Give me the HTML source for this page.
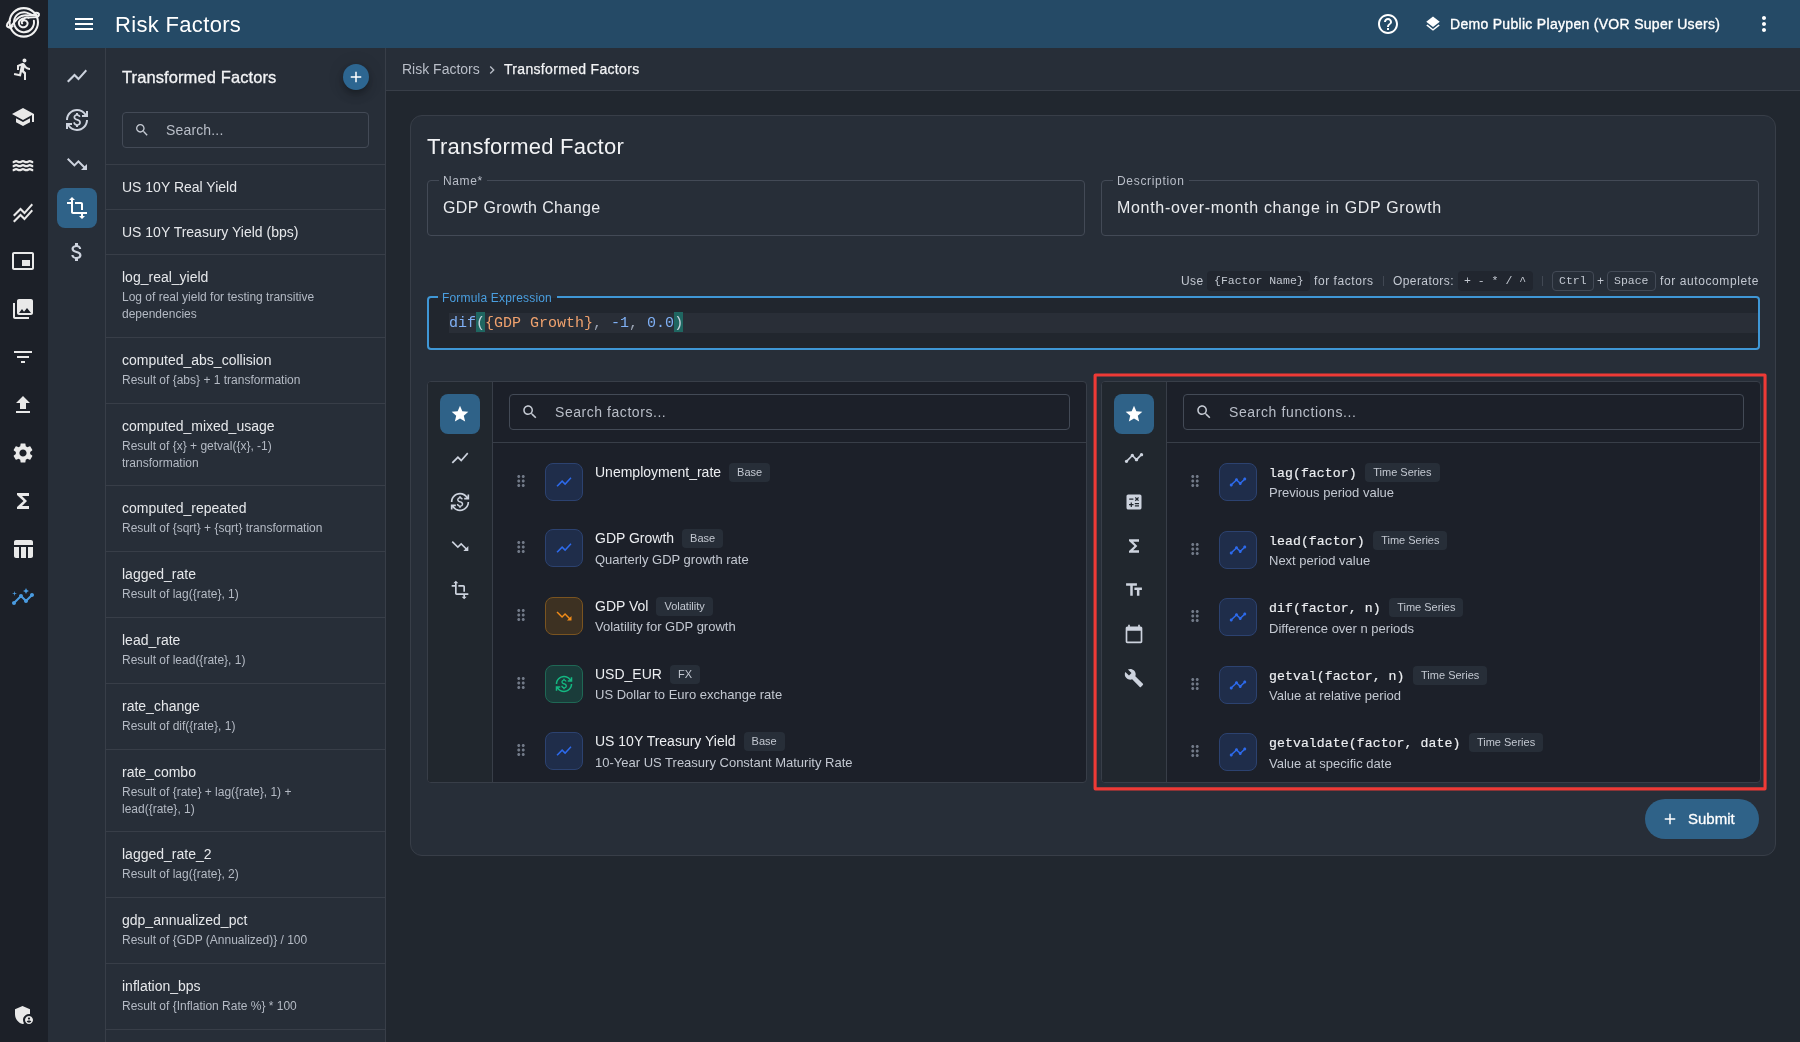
<!DOCTYPE html>
<html lang="en">
<head>
<meta charset="utf-8">
<title>Risk Factors</title>
<style>
*{box-sizing:border-box;margin:0;padding:0}
html,body{width:1800px;height:1042px;overflow:hidden;background:#21272f}
body{position:relative;font-family:"Liberation Sans",sans-serif;color:#e6e8eb;-webkit-font-smoothing:antialiased}
.abs{position:absolute}
.t{position:absolute;white-space:nowrap;will-change:transform}
svg{display:block}
.ic{position:absolute;width:24px;height:24px;fill:#fff}
/* frame */
#rail{left:0;top:0;width:48px;height:1042px;background:#1c2028}
#topbar{left:48px;top:0;width:1752px;height:48px;background:#254a66}
#rail2{left:48px;top:48px;width:58px;height:994px;background:#272e38;border-right:1px solid #383e48}
#side{left:106px;top:48px;width:280px;height:994px;background:#272e38;border-right:1px solid #383e48}
#crumb{left:386px;top:48px;width:1414px;height:43px;background:#272e38;border-bottom:1px solid #383e48}
#card{left:410px;top:115px;width:1366px;height:741px;background:#272e38;border:1px solid #383e48;border-radius:12px}
.hd{font-family:"Liberation Sans",sans-serif}
.mono{font-family:"Liberation Mono",monospace}
/* sidebar list */
.li{position:absolute;left:0;width:279px;border-top:1px solid #383e48}
.li .n{will-change:transform;position:absolute;left:16px;font-size:14px;line-height:20px;color:#e6e8eb;white-space:nowrap}
.li .d{will-change:transform;position:absolute;left:16px;font-size:12px;line-height:17px;color:#b4bac4;white-space:nowrap}
</style>
</head>
<body>
<div id="rail" class="abs"></div>
<div id="topbar" class="abs"></div>
<div id="rail2" class="abs"></div>
<div id="side" class="abs"></div>
<div id="crumb" class="abs"></div>
<div id="card" class="abs"></div>
<!--RAIL-->
<svg class="abs" id="logo" style="left:0;top:0;width:48px;height:48px" viewBox="0 0 48 48" fill="none" stroke="#f1f1f1" stroke-width="2" stroke-linecap="round" stroke-linejoin="round">
<circle cx="23.750" cy="22.350" r="14.250" stroke-width="2.100"/>
<path d="M10 20.800C7.600 22.600 5.900 25.200 7.500 26.800 9 28.100 11.200 27.400 12.600 26.200"/>
<path d="M34.500 12.900C36.800 12.300 39.500 13 39 15.100 38.700 16.300 37.800 16.700 36.800 16.900"/>
<path d="M33.880 20.640A10 10 0 1 1 29 13.540C31.500 15 34 15.500 36.800 15.300"/>
<path d="M8.800 27C11.500 26.500 13.500 23.500 15.500 20.800 17.500 18 20 15.700 24 15.400 27 15.200 31 15.600 36 15.500"/>
<path d="M28.60 17.70 L28.54 17.68 L28.47 17.67 L28.41 17.65 L28.34 17.64 L28.28 17.63 L28.21 17.61 L28.15 17.60 L28.08 17.59 L28.02 17.58 L27.96 17.57 L27.89 17.56 L27.83 17.56 L27.76 17.55 L27.70 17.54 L27.64 17.54 L27.57 17.53 L27.51 17.53 L27.45 17.52 L27.38 17.52 L27.32 17.52 L27.26 17.51 L27.20 17.51 L27.13 17.51 L27.07 17.51 L27.01 17.51 L26.95 17.51 L26.89 17.51 L26.83 17.52 L26.77 17.52 L26.71 17.52 L26.65 17.53 L26.59 17.53 L26.53 17.54 L26.47 17.54 L26.41 17.55 L26.35 17.56 L26.29 17.56 L26.23 17.57 L26.17 17.58 L26.12 17.59 L26.06 17.60 L26.00 17.61 L25.95 17.62 L25.89 17.63 L25.83 17.64 L25.78 17.66 L25.72 17.67 L25.67 17.68 L25.61 17.70 L25.56 17.71 L25.50 17.73 L25.45 17.74 L25.40 17.76 L25.34 17.78 L25.29 17.79 L25.24 17.81 L25.19 17.83 L25.14 17.85 L25.09 17.87 L25.04 17.89 L24.99 17.91 L24.94 17.93 L24.89 17.95 L24.84 17.97 L24.79 17.99 L24.74 18.01 L24.69 18.04 L24.65 18.06 L24.60 18.08 L24.55 18.11 L24.51 18.13 L24.46 18.16 L24.42 18.18 L24.37 18.21 L24.33 18.23 L24.29 18.26 L24.24 18.29 L24.20 18.32 L24.16 18.34 L24.12 18.37 L24.07 18.37 L24.03 18.37 L23.99 18.37 L23.95 18.38 L23.91 18.38 L23.87 18.38 L23.83 18.38 L23.79 18.39 L23.74 18.39 L23.70 18.39 L23.66 18.40 L23.62 18.40 L23.58 18.41 L23.54 18.41 L23.50 18.42 L23.46 18.42 L23.42 18.43 L23.38 18.44 L23.34 18.44 L23.30 18.45 L23.26 18.46 L23.22 18.47 L23.18 18.47 L23.14 18.48 L23.10 18.49 L23.06 18.50 L23.03 18.51 L22.99 18.52 L22.95 18.53 L22.91 18.54 L22.87 18.55 L22.83 18.56 L22.80 18.58 L22.76 18.59 L22.72 18.60 L22.68 18.61 L22.65 18.63 L22.61 18.64 L22.57 18.65 L22.54 18.67 L22.50 18.68 L22.46 18.70 L22.43 18.71 L22.39 18.73 L22.36 18.74 L22.32 18.76 L22.29 18.77 L22.25 18.79 L22.22 18.81 L22.18 18.82 L22.15 18.84 L22.11 18.86 L22.08 18.87 L22.04 18.89 L22.01 18.91 L21.98 18.93 L21.94 18.95 L21.91 18.97 L21.88 18.99 L21.85 19.01 L21.81 19.03 L21.78 19.05 L21.75 19.07 L21.72 19.09 L21.69 19.11 L21.66 19.13 L21.63 19.15 L21.60 19.17 L21.57 19.19 L21.54 19.22 L21.51 19.24 L21.48 19.26 L21.45 19.28 L21.42 19.31 L21.39 19.33 L21.36 19.35 L21.33 19.38 L21.31 19.40 L21.28 19.43 L21.25 19.45 L21.20 19.47 L21.15 19.50 L21.11 19.52 L21.06 19.55 L21.01 19.58 L20.96 19.60 L20.92 19.63 L20.87 19.66 L20.83 19.69 L20.78 19.72 L20.74 19.75 L20.69 19.78 L20.65 19.81 L20.60 19.84 L20.56 19.88 L20.52 19.91 L20.47 19.94 L20.43 19.98 L20.39 20.01 L20.35 20.05 L20.31 20.08 L20.27 20.12 L20.23 20.16 L20.19 20.20 L20.15 20.23 L20.11 20.27 L20.07 20.31 L20.03 20.35 L19.99 20.39 L19.96 20.44 L19.92 20.48 L19.89 20.52 L19.85 20.56 L19.82 20.61 L19.78 20.65 L19.75 20.69 L19.72 20.74 L19.68 20.78 L19.65 20.83 L19.62 20.88 L19.59 20.92 L19.56 20.97 L19.53 21.02 L19.50 21.06 L19.47 21.11 L19.44 21.16 L19.42 21.21 L19.39 21.26 L19.36 21.31 L19.34 21.36 L19.31 21.41 L19.29 21.46 L19.27 21.51 L19.24 21.56 L19.22 21.62 L19.20 21.67 L19.18 21.72 L19.16 21.77 L19.14 21.83 L19.12 21.88 L19.10 21.93 L19.09 21.99 L19.07 22.04 L19.05 22.10 L19.04 22.15 L19.03 22.21 L19.01 22.26 L19.00 22.32 L18.99 22.37 L18.97 22.43 L18.96 22.49 L18.95 22.54 L18.94 22.60 L18.94 22.66 L18.93 22.71 L18.92 22.77 L18.91 22.83 L18.91 22.89 L18.90 22.94 L18.90 23.00 L18.90 23.09 L18.91 23.17 L18.91 23.26 L18.92 23.34 L18.93 23.43 L18.94 23.52 L18.95 23.60 L18.96 23.69 L18.98 23.77 L19.00 23.86 L19.02 23.94 L19.04 24.02 L19.06 24.11 L19.08 24.19 L19.11 24.27 L19.13 24.35 L19.16 24.43 L19.19 24.52 L19.22 24.60 L19.26 24.67 L19.29 24.75 L19.33 24.83 L19.37 24.91 L19.41 24.98 L19.45 25.06 L19.49 25.13 L19.53 25.21 L19.58 25.28 L19.62 25.35 L19.67 25.42 L19.72 25.49 L19.77 25.56 L19.82 25.63 L19.88 25.70 L19.93 25.76 L19.99 25.83 L20.05 25.89 L20.10 25.95 L20.16 26.02 L20.22 26.08 L20.29 26.13 L20.35 26.19 L20.41 26.25 L20.48 26.30 L20.54 26.36 L20.61 26.41 L20.68 26.46 L20.75 26.51 L20.82 26.56 L20.89 26.61 L20.96 26.65 L21.03 26.70 L21.11 26.74 L21.18 26.78 L21.26 26.82 L21.33 26.86 L21.41 26.89 L21.49 26.93 L21.57 26.96 L21.64 27.00 L21.72 27.03 L21.80 27.06 L21.88 27.08 L21.97 27.11 L22.05 27.13 L22.13 27.16 L22.21 27.18 L22.29 27.20 L22.38 27.21 L22.46 27.23 L22.54 27.24 L22.63 27.26 L22.71 27.27 L22.79 27.28 L22.88 27.29 L22.96 27.29 L23.05 27.30 L23.13 27.30 L23.22 27.30 L23.30 27.30 L23.38 27.30 L23.47 27.30 L23.55 27.29 L23.64 27.29 L23.72 27.28 L23.81 27.27 L23.89 27.26 L23.97 27.25 L24.06 27.23 L24.14 27.22 L24.22 27.20 L24.30 27.18 L24.39 27.16 L24.47 27.14 L24.55 27.11 L24.63 27.09 L24.71 27.06 L24.79 27.03 L24.87 27.00 L24.95 26.97 L25.02 26.94 L25.10 26.91 L25.18 26.87 L25.25 26.83 L25.33 26.79 L25.40 26.75 L25.47 26.71 L25.55 26.67 L25.62 26.62 L25.69 26.58 L25.76 26.53 L25.83 26.48 L25.90 26.43 L25.96 26.38 L26.03 26.32 L26.09 26.27 L26.16 26.21 L26.22 26.16 L26.28 26.10 L26.34 26.04 L26.40 25.98 L26.46 25.92 L26.51 25.86 L26.57 25.79 L26.62 25.73 L26.68 25.66 L26.73 25.60 L26.78 25.53 L26.83 25.46 L26.88 25.39 L26.92 25.32 L26.97 25.25 L27.01 25.17 L27.05 25.10 L27.09 25.03 L27.13 24.95 L27.17 24.88 L27.21 24.80 L27.24 24.72 L27.27 24.65 L27.30 24.57 L27.33 24.49 L27.36 24.41 L27.39 24.33 L27.41 24.25 L27.44 24.17 L27.46 24.09 L27.48 24.00 L27.50 23.92 L27.52 23.84 L27.53 23.76 L27.55 23.67 L27.56 23.59 L27.57 23.51 L27.58 23.42 L27.59 23.34 L27.59 23.25 L27.60 23.17 L27.60 23.08 L27.60 23.00 L27.58 22.92 L27.55 22.83 L27.52 22.75 L27.49 22.67 L27.46 22.59 L27.43 22.51 L27.39 22.43 L27.36 22.36 L27.32 22.28 L27.28 22.21 L27.24 22.13 L27.20 22.06 L27.16 21.99 L27.12 21.92 L27.07 21.86 L27.03 21.79 L26.98 21.72 L26.93 21.66 L26.88 21.60 L26.83 21.54 L26.78 21.48 L26.73 21.42 L26.68 21.36 L26.62 21.31 L26.57 21.25 L26.51 21.20 L26.46 21.15 L26.40 21.10 L26.34 21.05 L26.28 21.01 L26.22 20.96 L26.16 20.92 L26.10 20.88 L26.04 20.84 L25.98 20.80 L25.92 20.76 L25.86 20.73 L25.79 20.69 L25.73 20.66 L25.67 20.63 L25.61 20.60 L25.54 20.57 L25.48 20.55 L25.41 20.52 L25.35 20.50 L25.29 20.48 L25.22 20.46 L25.16 20.44 L25.09 20.43 L25.03 20.41 L24.97 20.40 L24.90 20.39 L24.84 20.38 L24.77 20.37 L24.71 20.36 L24.65 20.35 L24.59 20.35 L24.52 20.35 L24.46 20.34 L24.40 20.34 L24.34 20.34 L24.28 20.35 L24.22 20.35 L24.16 20.36 L24.10 20.36 L24.04 20.37 L23.98 20.38 L23.93 20.39 L23.87 20.40 L23.81 20.41 L23.76 20.43 L23.71 20.44 L23.65 20.46 L23.60 20.48 L23.55 20.49 L23.50 20.51 L23.45 20.53 L23.40 20.55 L23.35 20.58 L23.30 20.60 L23.24 20.62 L23.19 20.63 L23.13 20.65 L23.08 20.67 L23.02 20.69 L22.97 20.71 L22.92 20.74 L22.86 20.76 L22.81 20.79 L22.77 20.81 L22.72 20.84 L22.67 20.87 L22.62 20.90 L22.58 20.93 L22.53 20.96 L22.49 21.00 L22.45 21.03 L22.41 21.07 L22.37 21.10 L22.33 21.14 L22.29 21.17 L22.26 21.21 L22.22 21.25 L22.19 21.29 L22.16 21.33 L22.13 21.37 L22.10 21.41 L22.07 21.45 L22.04 21.49 L22.01 21.53 L21.99 21.58 L21.97 21.62 L21.94 21.66 L21.92 21.71 L21.90 21.75 L21.89 21.79 L21.87 21.84 L21.85 21.88 L21.84 21.92 L21.83 21.97 L21.81 22.01 L21.80 22.06 L21.79 22.10 L21.79 22.14 L21.78 22.19 L21.77 22.23 L21.77 22.27 L21.77 22.32 L21.76 22.36 L21.76 22.40 L21.76 22.44 L21.76 22.49 L21.77 22.53 L21.77 22.57 L21.77 22.61 L21.78 22.65 L21.79 22.69 L21.79 22.73 L21.80 22.77 L21.81 22.80 L21.82 22.84 L21.84 22.88 L21.85 22.91 L21.86 22.95 L21.88 22.98 L21.89 23.02 L21.91 23.05 L21.92 23.08 L21.94 23.12 L21.96 23.15 L21.98 23.18 L22.00 23.21 L22.02 23.24 L22.04 23.26 L22.06 23.29 L22.08 23.32 L22.10 23.34 L22.13 23.36 L22.15 23.39 L22.17 23.41"/>
<path d="M28.300 17.700L37.300 17.300" stroke-width="1.600"/>
</svg>
<svg class="ic" style="left:11px;top:57px;width:24px;height:24px;fill:#e9e9e9" viewBox="0 0 24 24"><path d="M13.49 5.48c1.1 0 2-.9 2-2s-.9-2-2-2-2 .9-2 2 .9 2 2 2zm-3.6 13.9l1-4.4 2.1 2v6h2v-7.5l-2.1-2 .6-3c1.3 1.5 3.3 2.5 5.5 2.5v-2c-1.9 0-3.5-1-4.3-2.4l-1-1.6c-.4-.6-1-1-1.7-1-.3 0-.5.1-.8.1l-5.2 2.2v4.7h2v-3.4l1.8-.7-1.6 8.1-4.9-1-.4 2 7 1.4z"/></svg>
<svg class="ic" style="left:11px;top:105px;width:24px;height:24px;fill:#e9e9e9" viewBox="0 0 24 24"><path d="M5 13.18v4L12 21l7-3.82v-4L12 17l-7-3.82zM12 3L1 9l11 6 9-4.91V17h2V9L12 3z"/></svg>
<svg class="ic" style="left:11px;top:153px" viewBox="0 0 24 24"><path d="M1.700 9.2c1.700 0 1.700-1 3.420-1s1.700 1 3.420 1 1.700-1 3.420-1 1.700 1 3.420 1 1.700-1 3.420-1 1.700 1 3.420 1" fill="none" stroke="#e9e9e9" stroke-width="2.300"/><path d="M1.700 13.2c1.700 0 1.700-1 3.420-1s1.700 1 3.420 1 1.700-1 3.420-1 1.700 1 3.420 1 1.700-1 3.420-1 1.700 1 3.420 1" fill="none" stroke="#e9e9e9" stroke-width="2.300"/><path d="M1.700 17.2c1.700 0 1.700-1 3.420-1s1.700 1 3.420 1 1.700-1 3.420-1 1.700 1 3.420 1 1.700-1 3.420-1 1.700 1 3.420 1" fill="none" stroke="#e9e9e9" stroke-width="2.300"/></svg>
<svg class="ic" style="left:11px;top:201px;width:24px;height:24px;fill:#e9e9e9" viewBox="0 0 24 24"><path d="M2 19.99l7.5-7.51 4 4 7.09-7.97L22 9.92l-8.5 9.56-4-4-6 6.01-1.5-1.5zm1.5-4.5l6-6.01 4 4L22 3.92l-1.41-1.41-7.09 7.97-4-4L2 13.990l1.500 1.500z"/></svg>
<svg class="ic" style="left:11px;top:249px;width:24px;height:24px;fill:#e9e9e9" viewBox="0 0 24 24"><path d="M19 11h-8v6h8v-6zm4 8V4.980C23 3.880 22.100 3 21 3H3c-1.100 0-2 .880-2 1.980V19c0 1.100.900 2 2 2h18c1.100 0 2-.900 2-2zm-2 .020H3V4.970h18v14.050z"/></svg>
<svg class="ic" style="left:11px;top:297px;width:24px;height:24px;fill:#e9e9e9" viewBox="0 0 24 24"><path d="M22 16V4c0-1.100-.900-2-2-2H8c-1.100 0-2 .900-2 2v12c0 1.100.900 2 2 2h12c1.100 0 2-.900 2-2zm-11-4l2.030 2.710L16 11l4 5H8l3-4zM2 6v14c0 1.100.900 2 2 2h14v-2H4V6H2z"/></svg>
<svg class="ic" style="left:11px;top:345px;width:24px;height:24px;fill:#e9e9e9" viewBox="0 0 24 24"><path d="M10 18h4v-2h-4v2zM3 6v2h18V6H3zm3 7h12v-2H6v2z"/></svg>
<svg class="ic" style="left:11px;top:393px;width:24px;height:24px;fill:#e9e9e9" viewBox="0 0 24 24"><path d="M5 20h14v-2H5v2zm0-10h4v6h6v-6h4l-7-7-7 7z"/></svg>
<svg class="ic" style="left:11px;top:441px;width:24px;height:24px;fill:#e9e9e9" viewBox="0 0 24 24"><path d="M19.14 12.94c.04-.3.06-.61.06-.94 0-.32-.02-.64-.07-.94l2.030-1.580c.180-.140.230-.410.120-.610l-1.920-3.320c-.120-.220-.370-.290-.590-.220l-2.390.960c-.500-.380-1.030-.700-1.620-.940l-.360-2.540c-.040-.240-.240-.410-.480-.410h-3.840c-.240 0-.430.170-.470.410l-.360 2.540c-.590.240-1.130.570-1.620.940l-2.390-.960c-.220-.080-.470 0-.590.220L2.740 8.870c-.120.210-.080.470.120.610l2.030 1.580c-.050.300-.090.630-.090.940s.020.640.070.940l-2.030 1.580c-.180.140-.230.410-.120.610l1.920 3.320c.120.220.370.290.590.220l2.390-.960c.500.380 1.030.700 1.620.940l.360 2.540c.050.240.240.410.480.410h3.840c.240 0 .440-.170.470-.410l.360-2.540c.590-.240 1.130-.560 1.620-.940l2.390.960c.220.080.470 0 .590-.220l1.920-3.320c.120-.220.070-.470-.120-.610l-2.010-1.580zM12 15.600c-1.980 0-3.600-1.620-3.600-3.600s1.620-3.600 3.600-3.600 3.600 1.620 3.600 3.600-1.620 3.600-3.600 3.600z"/></svg>
<svg class="ic" style="left:11px;top:489px;width:24px;height:24px;fill:#e9e9e9" viewBox="0 0 24 24"><path d="M18 4H6v2l6.500 6L6 18v2h12v-3h-7l5-5-5-5h7z"/></svg>
<svg class="ic" style="left:11px;top:537px;width:24px;height:24px;fill:#e9e9e9" viewBox="0 0 24 24"><path d="M10 10.020h5V21h-5zM17 21h3c1.100 0 2-.900 2-2v-9h-5v11zm3-18H5c-1.100 0-2 .900-2 2v3h19V5c0-1.100-.900-2-2-2zM3 19c0 1.100.900 2 2 2h3V10H3v9z"/></svg>
<svg class="ic" style="left:11px;top:585px;width:24px;height:24px;fill:#4a9be0" viewBox="0 0 24 24"><path d="M21 8c-1.450 0-2.260 1.440-1.930 2.510l-3.550 3.560c-.300-.090-.740-.090-1.040 0l-2.550-2.550C12.270 10.450 11.460 9 10 9c-1.450 0-2.270 1.440-1.930 2.520l-4.560 4.550C2.440 15.740 1 16.550 1 18c0 1.100.900 2 2 2 1.450 0 2.260-1.440 1.930-2.510l4.550-4.560c.300.090.740.090 1.040 0l2.550 2.550C12.730 16.550 13.540 18 15 18c1.450 0 2.270-1.440 1.930-2.520l3.560-3.550c1.070.330 2.510-.480 2.510-1.930 0-1.100-.900-2-2-2zM15 9l.940-2.070L18 6l-2.060-.930L15 3l-.920 2.070L12 6l2.080.930zM3.500 11L4 9l2-.500L4 8l-.500-2L3 8l-2 .500L3 9z"/></svg>
<svg class="ic" style="left:12px;top:1003px;width:24px;height:24px;fill:#e9e9e9" viewBox="0 0 24 24"><path d="M17 11c.340 0 .670.040 1 .090V6.270L10.500 3 3 6.270v4.910c0 4.540 3.200 8.790 7.500 9.820.550-.130 1.080-.320 1.600-.550-.690-.980-1.100-2.170-1.100-3.450 0-3.310 2.690-6 6-6zM17 13c-2.210 0-4 1.790-4 4s1.790 4 4 4 4-1.790 4-4-1.790-4-4-4zm0 1.380c.620 0 1.120.510 1.120 1.120s-.510 1.120-1.120 1.120-1.120-.510-1.120-1.120.500-1.120 1.120-1.120zm0 5.370c-.930 0-1.740-.460-2.240-1.170.050-.720 1.510-1.080 2.240-1.080s2.190.360 2.240 1.080c-.500.710-1.310 1.170-2.240 1.170z"/></svg>
<!--TOPBAR-->
<svg class="ic" style="left:72px;top:12px;width:24px;height:24px;fill:#fff" viewBox="0 0 24 24"><path d="M3 18h18v-2H3v2zm0-5h18v-2H3v2zm0-7v2h18V6H3z"/></svg>
<div class="t hd" id="apptitle" style="left:114.500px;top:9px;font-size:22px;line-height:32px;color:#fff;letter-spacing:0.330px">Risk Factors</div>
<svg class="ic" style="left:1376px;top:12px;width:24px;height:24px;fill:#fff" viewBox="0 0 24 24"><path d="M11 18h2v-2h-2v2zm1-16C6.480 2 2 6.480 2 12s4.480 10 10 10 10-4.480 10-10S17.520 2 12 2zm0 18c-4.410 0-8-3.590-8-8s3.590-8 8-8 8 3.590 8 8-3.590 8-8 8zm0-14c-2.210 0-4 1.790-4 4h2c0-1.100.900-2 2-2s2 .900 2 2c0 2-3 1.750-3 5h2c0-2.250 3-2.500 3-5 0-2.210-1.790-4-4-4z"/></svg>
<svg class="ic" style="left:1424px;top:15px;width:18px;height:18px;fill:#fff" viewBox="0 0 24 24"><path d="M11.990 18.540l-7.370-5.730L3 14.070l9 7 9-7-1.630-1.270-7.380 5.740zM12 16l7.360-5.730L21 9l-9-7-9 7 1.630 1.270L12 16z"/></svg>
<div class="t hd" id="tenant" style="left:1450px;top:14px;font-size:14px;line-height:20px;color:#fff;font-weight:400;letter-spacing:0.300px;-webkit-text-stroke:0.350px #fff">Demo Public Playpen (VOR Super Users)</div>
<svg class="ic" style="left:1752px;top:12px;width:24px;height:24px;fill:#fff" viewBox="0 0 24 24"><path d="M12 8c1.100 0 2-.900 2-2s-.900-2-2-2-2 .900-2 2 .900 2 2 2zm0 2c-1.100 0-2 .900-2 2s.900 2 2 2 2-.900 2-2-.900-2-2-2zm0 6c-1.100 0-2 .900-2 2s.900 2 2 2 2-.900 2-2-.900-2-2-2z"/></svg>
<!--RAIL2-->
<svg class="ic" style="left:65px;top:64px;width:24px;height:24px;fill:#cdd3de" viewBox="0 0 24 24"><path d="M3.500 18.490l6-6.010 4 4L22 6.920l-1.410-1.410-7.090 7.970-4-4L2 16.990z"/></svg>
<svg class="ic" style="left:65px;top:108px;width:24px;height:24px;fill:#cdd3de" viewBox="0 0 24 24"><path d="M12.890 11.100c-1.780-.590-2.640-.960-2.640-1.900 0-1.020 1.110-1.390 1.810-1.390 1.310 0 1.790.990 1.900 1.340l1.580-.670c-.150-.450-.820-1.920-2.540-2.240V5h-2v1.260c-2.480.560-2.490 2.860-2.490 2.960 0 2.270 2.250 2.910 3.350 3.310 1.580.560 2.280 1.070 2.280 2.030 0 1.130-1.050 1.610-1.980 1.610-1.820 0-2.340-1.870-2.400-2.090l-1.660.670c.630 2.190 2.280 2.780 2.900 2.960V19h2v-1.240c.400-.090 2.900-.590 2.900-3.220 0-1.390-.610-2.610-3.010-3.440zM3 21H1v-6h6v2H4.520c1.610 2.410 4.360 4 7.480 4 4.970 0 9-4.030 9-9h2c0 6.080-4.920 11-11 11-3.720 0-7.010-1.850-9-4.670V21zm-2-9C1 5.920 5.920 1 12 1c3.720 0 7.010 1.850 9 4.670V3h2v6h-6V7h2.480C17.870 4.590 15.120 3 12 3c-4.970 0-9 4.030-9 9H1z"/></svg>
<svg class="ic" style="left:65px;top:152px;width:24px;height:24px;fill:#cdd3de" viewBox="0 0 24 24"><path d="M16 18l2.290-2.290-4.880-4.880-4 4L2 7.410 3.410 6l6 6 4-4 6.300 6.290L22 12v6z"/></svg>
<div class="abs" style="left:57px;top:188px;width:40px;height:40px;border-radius:8px;background:#2f6288"></div>
<svg class="ic" style="left:65px;top:196px;width:24px;height:24px;fill:#fff" viewBox="0 0 24 24"><path d="M22 18v-2H8V4h2L7 1 4 4h2v2H2v2h4v8c0 1.100.900 2 2 2h8v2h-2l3 3 3-3h-2v-2h4zM10 8h6v6h2V8c0-1.100-.900-2-2-2h-6v2z"/></svg>
<svg class="ic" style="left:65px;top:240px;width:24px;height:24px;fill:#cdd3de" viewBox="0 0 24 24"><path d="M11.800 10.900c-2.270-.590-3-1.200-3-2.150 0-1.090 1.010-1.850 2.700-1.850 1.780 0 2.440.850 2.500 2.100h2.210c-.070-1.720-1.120-3.300-3.210-3.810V3h-3v2.160c-1.940.420-3.500 1.680-3.500 3.610 0 2.310 1.910 3.460 4.700 4.130 2.500.600 3 1.480 3 2.410 0 .690-.490 1.790-2.700 1.790-2.060 0-2.870-.920-2.980-2.100h-2.200c.120 2.190 1.760 3.420 3.680 3.830V21h3v-2.150c1.950-.370 3.500-1.500 3.500-3.550 0-2.840-2.430-3.810-4.700-4.400z"/></svg>
<!--SIDE-->
<div class="t hd" id="sidetitle" style="left:122px;top:65px;font-size:16.500px;line-height:24px;color:#f2f3f5;letter-spacing:0.100px;-webkit-text-stroke:0.300px #f2f3f5">Transformed Factors</div>
<div class="abs" style="left:343px;top:64px;width:26px;height:26px;border-radius:50%;background:#2d6691;box-shadow:0 3px 5px -1px rgba(0,0,0,.2),0 6px 10px rgba(0,0,0,.14),0 1px 18px rgba(0,0,0,.12)"></div>
<svg class="ic" style="left:347px;top:68px;width:18px;height:18px;fill:#fff" viewBox="0 0 24 24"><path d="M19 13h-6v6h-2v-6H5v-2h6V5h2v6h6v2z"/></svg>
<div class="abs" style="left:122px;top:112px;width:247px;height:36px;border:1px solid #434a56;border-radius:4px"></div>
<svg class="ic" style="left:134px;top:122px;width:16px;height:16px;fill:#c5cad3" viewBox="0 0 24 24"><path d="M15.500 14h-.790l-.280-.270C15.410 12.590 16 11.110 16 9.500 16 5.910 13.090 3 9.500 3S3 5.910 3 9.500 5.910 16 9.500 16c1.610 0 3.090-.590 4.230-1.570l.270.280v.790l5 4.990L20.490 19l-4.990-5zm-6 0C7.010 14 5 11.990 5 9.500S7.010 5 9.500 5 14 7.010 14 9.500 11.990 14 9.500 14z"/></svg>
<div class="t hd" id="sidesearch" style="left:166px;top:120px;font-size:14px;line-height:20px;color:#b9bec8;letter-spacing:0.160px">Search...</div>
<div class="li" style="left:106px;top:164px;height:45px"><div class="n" style="top:12px">US 10Y Real Yield</div></div>
<div class="li" style="left:106px;top:209px;height:45px"><div class="n" style="top:12px">US 10Y Treasury Yield (bps)</div></div>
<div class="li" style="left:106px;top:254px;height:83px"><div class="n" style="top:12px">log_real_yield</div><div class="d" style="top:34px">Log of real yield for testing transitive</div><div class="d" style="top:50.5px">dependencies</div></div>
<div class="li" style="left:106px;top:337px;height:66px"><div class="n" style="top:12px">computed_abs_collision</div><div class="d" style="top:34px">Result of {abs} + 1 transformation</div></div>
<div class="li" style="left:106px;top:403px;height:82px"><div class="n" style="top:12px">computed_mixed_usage</div><div class="d" style="top:34px">Result of {x} + getval({x}, -1)</div><div class="d" style="top:50.5px">transformation</div></div>
<div class="li" style="left:106px;top:485px;height:66px"><div class="n" style="top:12px">computed_repeated</div><div class="d" style="top:34px">Result of {sqrt} + {sqrt} transformation</div></div>
<div class="li" style="left:106px;top:551px;height:66px"><div class="n" style="top:12px">lagged_rate</div><div class="d" style="top:34px">Result of lag({rate}, 1)</div></div>
<div class="li" style="left:106px;top:617px;height:66px"><div class="n" style="top:12px">lead_rate</div><div class="d" style="top:34px">Result of lead({rate}, 1)</div></div>
<div class="li" style="left:106px;top:683px;height:66px"><div class="n" style="top:12px">rate_change</div><div class="d" style="top:34px">Result of dif({rate}, 1)</div></div>
<div class="li" style="left:106px;top:749px;height:82px"><div class="n" style="top:12px">rate_combo</div><div class="d" style="top:34px">Result of {rate} + lag({rate}, 1) +</div><div class="d" style="top:50.5px">lead({rate}, 1)</div></div>
<div class="li" style="left:106px;top:831px;height:66px"><div class="n" style="top:12px">lagged_rate_2</div><div class="d" style="top:34px">Result of lag({rate}, 2)</div></div>
<div class="li" style="left:106px;top:897px;height:66px"><div class="n" style="top:12px">gdp_annualized_pct</div><div class="d" style="top:34px">Result of {GDP (Annualized)} / 100</div></div>
<div class="li" style="left:106px;top:963px;height:66px"><div class="n" style="top:12px">inflation_bps</div><div class="d" style="top:34px">Result of {Inflation Rate %} * 100</div></div>
<div class="li" style="left:106px;top:1029px;height:20px"></div>
<!--CRUMB-->
<div class="t" id="bc1" style="left:402px;top:59px;font-size:14px;line-height:20px;color:#b9bec8">Risk Factors</div>
<svg class="ic" style="left:484px;top:61.5px;width:16px;height:16px;fill:#b9bec8" viewBox="0 0 24 24"><path d="M10 6L8.590 7.410 13.170 12l-4.580 4.590L10 18l6-6z"/></svg>
<div class="t hd" id="bc2" style="left:504px;top:59px;font-size:14px;line-height:20px;color:#f2f3f5;font-weight:400;letter-spacing:0.320px;-webkit-text-stroke:0.250px #f2f3f5">Transformed Factors</div>
<!--FORM-->
<div class="t hd" id="cardtitle" style="left:427px;top:131px;font-size:22px;line-height:32px;color:#f2f3f5;letter-spacing:0.260px">Transformed Factor</div>
<div class="abs" style="left:427px;top:180px;width:658px;height:56px;border:1px solid #434a56;border-radius:4px"></div>
<div class="t hd" id="lblname" style="left:439px;top:173px;padding:0 4px;font-size:12px;line-height:16px;color:#b9bec8;background:#272e38;letter-spacing:0.600px">Name*</div>
<div class="t hd" id="valname" style="left:443px;top:196px;font-size:16px;line-height:24px;color:#e9ebee;letter-spacing:0.390px">GDP Growth Change</div>
<div class="abs" style="left:1101px;top:180px;width:658px;height:56px;border:1px solid #434a56;border-radius:4px"></div>
<div class="t hd" id="lbldesc" style="left:1113px;top:173px;padding:0 4px;font-size:12px;line-height:16px;color:#b9bec8;background:#272e38;letter-spacing:0.680px">Description</div>
<div class="t hd" id="valdesc" style="left:1117px;top:196px;font-size:16px;line-height:24px;color:#e9ebee;letter-spacing:0.690px">Month-over-month change in GDP Growth</div>
<div class="t hd" id="h1" style="left:1181px;top:271px;font-size:12px;line-height:20px;color:#c3c8d1;letter-spacing:0.390px">Use</div>
<div class="abs" style="left:1207px;top:271px;width:103px;height:20px;background:#21262f;border-radius:4px"></div>
<div class="t mono" id="h2" style="left:1213.700px;top:271px;font-size:11.500px;line-height:20px;color:#c3c8d1">{Factor Name}</div>
<div class="t hd" id="h3" style="left:1313.700px;top:271px;font-size:12px;line-height:20px;color:#c3c8d1;letter-spacing:0.570px">for factors</div>
<div class="abs" style="left:1383px;top:276px;width:1px;height:10px;background:#414853"></div>
<div class="t hd" id="h4" style="left:1393.300px;top:271px;font-size:12px;line-height:20px;color:#c3c8d1;letter-spacing:0.420px">Operators:</div>
<div class="abs" style="left:1458px;top:271px;width:75px;height:20px;background:#21262f;border-radius:4px"></div>
<div class="t mono" id="h5" style="left:1464.200px;top:271px;font-size:11.500px;line-height:20px;color:#c3c8d1">+ - * / ^</div>
<div class="abs" style="left:1542px;top:276px;width:1px;height:10px;background:#414853"></div>
<div class="abs" style="left:1552px;top:271px;width:42px;height:20px;border:1px solid #434a56;border-radius:4px"></div>
<div class="t mono" id="h6" style="left:1558.800px;top:271px;font-size:11.500px;line-height:20px;color:#c3c8d1">Ctrl</div>
<div class="t hd" id="h7" style="left:1597px;top:271px;font-size:12px;line-height:20px;color:#c3c8d1">+</div>
<div class="abs" style="left:1607px;top:271px;width:49px;height:20px;border:1px solid #434a56;border-radius:4px"></div>
<div class="t mono" id="h8" style="left:1614px;top:271px;font-size:11.500px;line-height:20px;color:#c3c8d1">Space</div>
<div class="t hd" id="h9" style="left:1659.800px;top:271px;font-size:12px;line-height:20px;color:#c3c8d1;letter-spacing:0.600px">for autocomplete</div>
<div class="abs" style="left:427px;top:296px;width:1333px;height:54px;border:2px solid #3f97d6;border-radius:4px;background:#21262e"></div>
<div class="abs" style="left:449px;top:313px;width:1309px;height:19.500px;background:#292e37"></div><div class="abs" style="left:476px;top:312px;width:9px;height:20px;background:#1f6661"></div><div class="abs" style="left:674px;top:312px;width:9px;height:20px;background:#1f6661"></div>
<div class="abs" style="left:438px;top:296px;width:119px;height:2px;background:#272e38"></div>
<div class="t hd" id="lblformula" style="left:438px;top:290px;padding:0 4px;font-size:12px;line-height:16px;color:#4a9fe0;;letter-spacing:0.180px">Formula Expression</div>
<div class="t mono" id="code" style="left:449px;top:314px;font-size:15px;line-height:20px;color:#9aa3b2"><span style="color:#7fb0f5">dif</span><span style="color:#c9d3dd">(</span><span style="color:#f0a26e">{GDP Growth}</span>, <span style="color:#7fb0f5">-1</span>, <span style="color:#7fb0f5">0.0</span><span style="color:#c9d3dd">)</span></div>
<!--LEFTPANEL-->
<div class="abs" style="left:427px;top:381px;width:660px;height:402px;background:#1c2029;border:1px solid #383e48;border-radius:4px;overflow:hidden"><div class="abs" style="left:0;top:0;width:65px;height:400px;background:#21272e;border-right:1px solid #383e48"></div><div class="abs" style="left:65px;top:60px;width:593px;height:1px;background:#383e48"></div></div>
<div class="abs" style="left:440px;top:394px;width:40px;height:40px;border-radius:8px;background:#2f6288"></div>
<svg class="ic" style="left:450px;top:404px;width:20px;height:20px;fill:#fff" viewBox="0 0 24 24"><path d="M12 17.270L18.180 21l-1.640-7.030L22 9.240l-7.190-.610L12 2 9.190 8.630 2 9.240l5.460 4.730L5.820 21z"/></svg>
<svg class="ic" style="left:450px;top:448px;width:20px;height:20px;fill:#cdd3de" viewBox="0 0 24 24"><path d="M3.500 18.490l6-6.010 4 4L22 6.920l-1.410-1.410-7.090 7.970-4-4L2 16.990z"/></svg>
<svg class="ic" style="left:450px;top:492px;width:20px;height:20px;fill:#cdd3de" viewBox="0 0 24 24"><path d="M12.890 11.100c-1.780-.590-2.640-.960-2.640-1.900 0-1.020 1.110-1.390 1.810-1.390 1.310 0 1.790.990 1.900 1.340l1.580-.670c-.150-.450-.820-1.920-2.540-2.240V5h-2v1.260c-2.480.560-2.490 2.860-2.490 2.960 0 2.270 2.250 2.910 3.350 3.310 1.580.560 2.280 1.070 2.280 2.030 0 1.130-1.050 1.610-1.980 1.610-1.820 0-2.340-1.870-2.400-2.090l-1.660.670c.630 2.190 2.280 2.780 2.900 2.960V19h2v-1.240c.400-.090 2.900-.590 2.900-3.220 0-1.390-.610-2.610-3.010-3.440zM3 21H1v-6h6v2H4.520c1.610 2.410 4.360 4 7.480 4 4.970 0 9-4.030 9-9h2c0 6.080-4.920 11-11 11-3.720 0-7.010-1.850-9-4.670V21zm-2-9C1 5.920 5.920 1 12 1c3.720 0 7.010 1.850 9 4.670V3h2v6h-6V7h2.480C17.870 4.590 15.120 3 12 3c-4.970 0-9 4.030-9 9H1z"/></svg>
<svg class="ic" style="left:450px;top:536px;width:20px;height:20px;fill:#cdd3de" viewBox="0 0 24 24"><path d="M16 18l2.290-2.290-4.880-4.880-4 4L2 7.410 3.410 6l6 6 4-4 6.300 6.290L22 12v6z"/></svg>
<svg class="ic" style="left:450px;top:580px;width:20px;height:20px;fill:#cdd3de" viewBox="0 0 24 24"><path d="M22 18v-2H8V4h2L7 1 4 4h2v2H2v2h4v8c0 1.100.900 2 2 2h8v2h-2l3 3 3-3h-2v-2h4zM10 8h6v6h2V8c0-1.100-.900-2-2-2h-6v2z"/></svg>
<div class="abs" style="left:509px;top:394px;width:561px;height:36px;border:1px solid #434a56;border-radius:4px"></div>
<svg class="ic" style="left:520.5px;top:403px;width:18px;height:18px;fill:#c5cad3" viewBox="0 0 24 24"><path d="M15.500 14h-.790l-.280-.270C15.410 12.590 16 11.110 16 9.500 16 5.910 13.090 3 9.500 3S3 5.910 3 9.500 5.910 16 9.500 16c1.610 0 3.090-.590 4.230-1.570l.270.280v.790l5 4.990L20.490 19l-4.990-5zm-6 0C7.010 14 5 11.990 5 9.500S7.010 5 9.500 5 14 7.010 14 9.500 11.990 14 9.500 14z"/></svg>
<div class="t hd" id="phL" style="left:555px;top:402px;font-size:14px;line-height:20px;color:#b9bec8;letter-spacing:0.550px">Search factors...</div>
<svg class="ic" style="left:512px;top:471.5px;width:18px;height:18px;fill:#727a88" viewBox="0 0 24 24"><path d="M11 18c0 1.100-.900 2-2 2s-2-.900-2-2 .900-2 2-2 2 .900 2 2zm-2-8c-1.100 0-2 .900-2 2s.900 2 2 2 2-.900 2-2-.900-2-2-2zm0-6c-1.100 0-2 .900-2 2s.900 2 2 2 2-.900 2-2-.900-2-2-2zm6 4c1.100 0 2-.900 2-2s-.900-2-2-2-2 .900-2 2 .900 2 2 2zm0 2c-1.100 0-2 .900-2 2s.900 2 2 2 2-.900 2-2-.900-2-2-2zm0 6c-1.100 0-2 .900-2 2s.900 2 2 2 2-.900 2-2-.900-2-2-2z"/></svg>
<div class="abs" style="left:545px;top:463px;width:38px;height:38px;border-radius:8px;background:#1f2d4a;border:1px solid #2c4270"></div>
<svg class="ic" style="left:555px;top:473px;width:18px;height:18px;fill:#2d6aec" viewBox="0 0 24 24"><path d="M3.500 18.490l6-6.010 4 4L22 6.920l-1.410-1.410-7.090 7.970-4-4L2 16.990z"/></svg>
<div class="t" style="left:595px;top:460px;font-size:14px;line-height:24px;color:#eceef1"><span id="lt0">Unemployment_rate</span><span class="chip" style="display:inline-block;vertical-align:top;margin-left:8px;margin-top:3px;padding:0 8px;height:19px;border-radius:4px;background:#272e38;color:#c3c8d1;font-size:11px;line-height:19px">Base</span></div>
<svg class="ic" style="left:512px;top:537.5px;width:18px;height:18px;fill:#727a88" viewBox="0 0 24 24"><path d="M11 18c0 1.100-.900 2-2 2s-2-.900-2-2 .900-2 2-2 2 .900 2 2zm-2-8c-1.100 0-2 .900-2 2s.900 2 2 2 2-.900 2-2-.900-2-2-2zm0-6c-1.100 0-2 .900-2 2s.900 2 2 2 2-.900 2-2-.900-2-2-2zm6 4c1.100 0 2-.900 2-2s-.900-2-2-2-2 .900-2 2 .900 2 2 2zm0 2c-1.100 0-2 .900-2 2s.900 2 2 2 2-.900 2-2-.900-2-2-2zm0 6c-1.100 0-2 .900-2 2s.900 2 2 2 2-.900 2-2-.900-2-2-2z"/></svg>
<div class="abs" style="left:545px;top:529px;width:38px;height:38px;border-radius:8px;background:#1f2d4a;border:1px solid #2c4270"></div>
<svg class="ic" style="left:555px;top:539px;width:18px;height:18px;fill:#2d6aec" viewBox="0 0 24 24"><path d="M3.500 18.490l6-6.010 4 4L22 6.920l-1.410-1.410-7.090 7.970-4-4L2 16.990z"/></svg>
<div class="t" style="left:595px;top:526px;font-size:14px;line-height:24px;color:#eceef1"><span id="lt1">GDP Growth</span><span class="chip" style="display:inline-block;vertical-align:top;margin-left:8px;margin-top:3px;padding:0 8px;height:19px;border-radius:4px;background:#272e38;color:#c3c8d1;font-size:11px;line-height:19px">Base</span></div>
<div class="t" id="ld1" style="left:595px;top:550px;font-size:13px;line-height:20px;color:#c3c8d1">Quarterly GDP growth rate</div>
<svg class="ic" style="left:512px;top:605.5px;width:18px;height:18px;fill:#727a88" viewBox="0 0 24 24"><path d="M11 18c0 1.100-.900 2-2 2s-2-.900-2-2 .900-2 2-2 2 .900 2 2zm-2-8c-1.100 0-2 .900-2 2s.900 2 2 2 2-.900 2-2-.900-2-2-2zm0-6c-1.100 0-2 .900-2 2s.900 2 2 2 2-.900 2-2-.900-2-2-2zm6 4c1.100 0 2-.900 2-2s-.900-2-2-2-2 .900-2 2 .900 2 2 2zm0 2c-1.100 0-2 .900-2 2s.900 2 2 2 2-.900 2-2-.900-2-2-2zm0 6c-1.100 0-2 .900-2 2s.900 2 2 2 2-.900 2-2-.900-2-2-2z"/></svg>
<div class="abs" style="left:545px;top:597px;width:38px;height:38px;border-radius:8px;background:#3d3122;border:1px solid #7a5420"></div>
<svg class="ic" style="left:555px;top:607px;width:18px;height:18px;fill:#f28c18" viewBox="0 0 24 24"><path d="M16 18l2.290-2.290-4.880-4.880-4 4L2 7.410 3.410 6l6 6 4-4 6.300 6.290L22 12v6z"/></svg>
<div class="t" style="left:595px;top:594px;font-size:14px;line-height:24px;color:#eceef1"><span id="lt2">GDP Vol</span><span class="chip" style="display:inline-block;vertical-align:top;margin-left:8px;margin-top:3px;padding:0 8px;height:19px;border-radius:4px;background:#272e38;color:#c3c8d1;font-size:11px;line-height:19px">Volatility</span></div>
<div class="t" id="ld2" style="left:595px;top:617px;font-size:13px;line-height:20px;color:#c3c8d1">Volatility for GDP growth</div>
<svg class="ic" style="left:512px;top:673.5px;width:18px;height:18px;fill:#727a88" viewBox="0 0 24 24"><path d="M11 18c0 1.100-.900 2-2 2s-2-.900-2-2 .900-2 2-2 2 .900 2 2zm-2-8c-1.100 0-2 .900-2 2s.900 2 2 2 2-.900 2-2-.900-2-2-2zm0-6c-1.100 0-2 .900-2 2s.900 2 2 2 2-.900 2-2-.900-2-2-2zm6 4c1.100 0 2-.900 2-2s-.900-2-2-2-2 .900-2 2 .900 2 2 2zm0 2c-1.100 0-2 .900-2 2s.900 2 2 2 2-.900 2-2-.900-2-2-2zm0 6c-1.100 0-2 .900-2 2s.900 2 2 2 2-.900 2-2-.900-2-2-2z"/></svg>
<div class="abs" style="left:545px;top:665px;width:38px;height:38px;border-radius:8px;background:#1a3c3a;border:1px solid #1f6855"></div>
<svg class="ic" style="left:555px;top:675px;width:18px;height:18px;fill:#14b882" viewBox="0 0 24 24"><path d="M12.890 11.100c-1.780-.590-2.640-.960-2.640-1.900 0-1.020 1.110-1.390 1.810-1.390 1.310 0 1.790.990 1.900 1.340l1.580-.670c-.150-.450-.820-1.920-2.540-2.240V5h-2v1.260c-2.480.560-2.490 2.860-2.490 2.960 0 2.270 2.250 2.910 3.350 3.310 1.580.560 2.280 1.070 2.280 2.030 0 1.130-1.050 1.610-1.980 1.610-1.820 0-2.340-1.870-2.400-2.090l-1.660.670c.630 2.190 2.280 2.780 2.900 2.960V19h2v-1.240c.400-.090 2.900-.590 2.900-3.220 0-1.390-.610-2.610-3.010-3.440zM3 21H1v-6h6v2H4.520c1.610 2.410 4.360 4 7.480 4 4.970 0 9-4.030 9-9h2c0 6.080-4.920 11-11 11-3.720 0-7.010-1.850-9-4.670V21zm-2-9C1 5.920 5.920 1 12 1c3.720 0 7.010 1.850 9 4.670V3h2v6h-6V7h2.480C17.870 4.590 15.120 3 12 3c-4.970 0-9 4.030-9 9H1z"/></svg>
<div class="t" style="left:595px;top:662px;font-size:14px;line-height:24px;color:#eceef1"><span id="lt3">USD_EUR</span><span class="chip" style="display:inline-block;vertical-align:top;margin-left:8px;margin-top:3px;padding:0 8px;height:19px;border-radius:4px;background:#272e38;color:#c3c8d1;font-size:11px;line-height:19px">FX</span></div>
<div class="t" id="ld3" style="left:595px;top:685px;font-size:13px;line-height:20px;color:#c3c8d1">US Dollar to Euro exchange rate</div>
<svg class="ic" style="left:512px;top:740.5px;width:18px;height:18px;fill:#727a88" viewBox="0 0 24 24"><path d="M11 18c0 1.100-.900 2-2 2s-2-.900-2-2 .900-2 2-2 2 .900 2 2zm-2-8c-1.100 0-2 .900-2 2s.900 2 2 2 2-.900 2-2-.900-2-2-2zm0-6c-1.100 0-2 .900-2 2s.900 2 2 2 2-.900 2-2-.900-2-2-2zm6 4c1.100 0 2-.900 2-2s-.900-2-2-2-2 .900-2 2 .900 2 2 2zm0 2c-1.100 0-2 .900-2 2s.900 2 2 2 2-.900 2-2-.900-2-2-2zm0 6c-1.100 0-2 .900-2 2s.900 2 2 2 2-.900 2-2-.900-2-2-2z"/></svg>
<div class="abs" style="left:545px;top:732px;width:38px;height:38px;border-radius:8px;background:#1f2d4a;border:1px solid #2c4270"></div>
<svg class="ic" style="left:555px;top:742px;width:18px;height:18px;fill:#2d6aec" viewBox="0 0 24 24"><path d="M3.500 18.490l6-6.010 4 4L22 6.920l-1.410-1.410-7.090 7.970-4-4L2 16.990z"/></svg>
<div class="t" style="left:595px;top:729px;font-size:14px;line-height:24px;color:#eceef1"><span id="lt4">US 10Y Treasury Yield</span><span class="chip" style="display:inline-block;vertical-align:top;margin-left:8px;margin-top:3px;padding:0 8px;height:19px;border-radius:4px;background:#272e38;color:#c3c8d1;font-size:11px;line-height:19px">Base</span></div>
<div class="t" id="ld4" style="left:595px;top:753px;font-size:13px;line-height:20px;color:#c3c8d1">10-Year US Treasury Constant Maturity Rate</div>
<!--RIGHTPANEL-->
<div class="abs" style="left:1101px;top:381px;width:660px;height:402px;background:#1c2029;border:1px solid #383e48;border-radius:4px;overflow:hidden"><div class="abs" style="left:0;top:0;width:65px;height:400px;background:#21272e;border-right:1px solid #383e48"></div><div class="abs" style="left:65px;top:60px;width:593px;height:1px;background:#383e48"></div></div>
<div class="abs" style="left:1114px;top:394px;width:40px;height:40px;border-radius:8px;background:#2f6288"></div>
<svg class="ic" style="left:1124px;top:404px;width:20px;height:20px;fill:#fff" viewBox="0 0 24 24"><path d="M12 17.270L18.180 21l-1.640-7.030L22 9.240l-7.190-.610L12 2 9.190 8.630 2 9.240l5.460 4.730L5.820 21z"/></svg>
<svg class="ic" style="left:1124px;top:448px;width:20px;height:20px;fill:#cdd3de" viewBox="0 0 24 24"><path d="M23 8c0 1.100-.900 2-2 2-.180 0-.350-.020-.510-.070l-3.560 3.550c.050.160.070.340.070.520 0 1.100-.900 2-2 2s-2-.900-2-2c0-.180.020-.360.070-.520l-2.550-2.550c-.160.050-.340.070-.520.070s-.360-.020-.520-.070l-4.550 4.560c.050.160.070.330.070.510 0 1.100-.900 2-2 2s-2-.900-2-2 .900-2 2-2c.180 0 .350.020.510.070l4.560-4.550C8.020 9.360 8 9.180 8 9c0-1.100.900-2 2-2s2 .900 2 2c0 .180-.020.360-.070.520l2.550 2.550c.160-.050.340-.070.520-.070s.360.020.520.070l3.550-3.560C19.020 8.350 19 8.180 19 8c0-1.100.900-2 2-2s2 .900 2 2z"/></svg>
<svg class="ic" style="left:1124px;top:492px;width:20px;height:20px;fill:#cdd3de" viewBox="0 0 24 24"><path d="M19 3H5c-1.100 0-2 .900-2 2v14c0 1.100.900 2 2 2h14c1.100 0 2-.900 2-2V5c0-1.100-.900-2-2-2zm-5.970 4.060L14.090 6l1.410 1.410L16.910 6l1.060 1.060-1.410 1.410 1.410 1.410-1.060 1.060-1.410-1.400-1.410 1.410-1.060-1.060 1.410-1.410-1.410-1.420zm-6.780.660h5v1.500h-5v-1.500zM11.500 16h-2v2H8v-2H6v-1.500h2v-2h1.500v2h2V16zm6.500 1.250h-5v-1.500h5v1.500zm0-2.500h-5v-1.500h5v1.500z"/></svg>
<svg class="ic" style="left:1124px;top:536px;width:20px;height:20px;fill:#cdd3de" viewBox="0 0 24 24"><path d="M18 4H6v2l6.500 6L6 18v2h12v-3h-7l5-5-5-5h7z"/></svg>
<svg class="ic" style="left:1124px;top:580px;width:20px;height:20px;fill:#cdd3de" viewBox="0 0 24 24"><path d="M2.500 4v3h5v12h3V7h5V4h-13zm19 5h-9v3h3v7h3v-7h3V9z"/></svg>
<svg class="ic" style="left:1124px;top:624px;width:20px;height:20px;fill:#cdd3de" viewBox="0 0 24 24"><path d="M20 3h-1V1h-2v2H7V1H5v2H4c-1.100 0-2 .900-2 2v16c0 1.100.900 2 2 2h16c1.100 0 2-.900 2-2V5c0-1.100-.900-2-2-2zm0 18H4V8h16v13z"/></svg>
<svg class="ic" style="left:1124px;top:668px;width:20px;height:20px;fill:#cdd3de" viewBox="0 0 24 24"><path d="M22.700 19l-9.100-9.100c.900-2.300.400-5-1.500-6.900-2-2-5-2.400-7.400-1.300L9 6 6 9 1.600 4.700C.400 7.100.900 10.100 2.900 12.100c1.900 1.900 4.600 2.400 6.900 1.500l9.100 9.100c.400.400 1 .400 1.400 0l2.300-2.300c.500-.400.500-1.100.100-1.400z"/></svg>
<div class="abs" style="left:1183px;top:394px;width:561px;height:36px;border:1px solid #434a56;border-radius:4px"></div>
<svg class="ic" style="left:1194.5px;top:403px;width:18px;height:18px;fill:#c5cad3" viewBox="0 0 24 24"><path d="M15.500 14h-.790l-.280-.270C15.410 12.590 16 11.110 16 9.500 16 5.910 13.090 3 9.500 3S3 5.910 3 9.500 5.910 16 9.500 16c1.610 0 3.090-.590 4.230-1.570l.270.280v.790l5 4.990L20.490 19l-4.990-5zm-6 0C7.010 14 5 11.990 5 9.500S7.010 5 9.500 5 14 7.010 14 9.500 11.990 14 9.500 14z"/></svg>
<div class="t hd" id="phR" style="left:1229px;top:402px;font-size:14px;line-height:20px;color:#b9bec8;letter-spacing:0.610px">Search functions...</div>
<svg class="ic" style="left:1186px;top:471.5px;width:18px;height:18px;fill:#727a88" viewBox="0 0 24 24"><path d="M11 18c0 1.100-.900 2-2 2s-2-.900-2-2 .900-2 2-2 2 .900 2 2zm-2-8c-1.100 0-2 .900-2 2s.900 2 2 2 2-.900 2-2-.900-2-2-2zm0-6c-1.100 0-2 .900-2 2s.900 2 2 2 2-.900 2-2-.900-2-2-2zm6 4c1.100 0 2-.900 2-2s-.900-2-2-2-2 .900-2 2 .900 2 2 2zm0 2c-1.100 0-2 .900-2 2s.900 2 2 2 2-.900 2-2-.900-2-2-2zm0 6c-1.100 0-2 .900-2 2s.900 2 2 2 2-.900 2-2-.900-2-2-2z"/></svg>
<div class="abs" style="left:1219px;top:463px;width:38px;height:38px;border-radius:8px;background:#1f2d4a;border:1px solid #2c4270"></div>
<svg class="ic" style="left:1229px;top:473px;width:18px;height:18px;fill:#2d6aec" viewBox="0 0 24 24"><path d="M23 8c0 1.100-.900 2-2 2-.180 0-.350-.020-.510-.070l-3.560 3.550c.050.160.070.340.070.520 0 1.100-.900 2-2 2s-2-.900-2-2c0-.180.020-.360.070-.520l-2.550-2.550c-.160.050-.340.070-.520.070s-.360-.020-.520-.070l-4.550 4.560c.050.160.070.330.070.510 0 1.100-.900 2-2 2s-2-.900-2-2 .900-2 2-2c.180 0 .350.020.510.070l4.560-4.550C8.020 9.360 8 9.180 8 9c0-1.100.900-2 2-2s2 .900 2 2c0 .180-.020.360-.070.520l2.550 2.550c.160-.050.340-.070.520-.070s.360.020.520.070l3.550-3.560C19.020 8.350 19 8.180 19 8c0-1.100.900-2 2-2s2 .900 2 2z"/></svg>
<div class="t" style="left:1269px;top:461px;font-size:13.200px;line-height:24px;color:#eceef1"><span class="mono" id="rt0" style="letter-spacing:0.060px;-webkit-text-stroke:0.180px #eceef1">lag(factor)</span><span class="chip" style="display:inline-block;vertical-align:top;margin-left:8.500px;margin-top:2px;padding:0 8px;height:19px;border-radius:4px;background:#272e38;color:#c3c8d1;font-size:11px;line-height:19px;font-family:'Liberation Sans',sans-serif">Time Series</span></div>
<div class="t" id="rd0" style="left:1269px;top:483px;font-size:13px;line-height:20px;color:#c3c8d1">Previous period value</div>
<svg class="ic" style="left:1186px;top:539.5px;width:18px;height:18px;fill:#727a88" viewBox="0 0 24 24"><path d="M11 18c0 1.100-.900 2-2 2s-2-.900-2-2 .900-2 2-2 2 .900 2 2zm-2-8c-1.100 0-2 .900-2 2s.900 2 2 2 2-.900 2-2-.900-2-2-2zm0-6c-1.100 0-2 .900-2 2s.900 2 2 2 2-.900 2-2-.900-2-2-2zm6 4c1.100 0 2-.900 2-2s-.900-2-2-2-2 .900-2 2 .900 2 2 2zm0 2c-1.100 0-2 .900-2 2s.900 2 2 2 2-.900 2-2-.900-2-2-2zm0 6c-1.100 0-2 .900-2 2s.900 2 2 2 2-.900 2-2-.900-2-2-2z"/></svg>
<div class="abs" style="left:1219px;top:531px;width:38px;height:38px;border-radius:8px;background:#1f2d4a;border:1px solid #2c4270"></div>
<svg class="ic" style="left:1229px;top:541px;width:18px;height:18px;fill:#2d6aec" viewBox="0 0 24 24"><path d="M23 8c0 1.100-.900 2-2 2-.180 0-.350-.020-.510-.070l-3.560 3.550c.050.160.070.340.070.520 0 1.100-.900 2-2 2s-2-.900-2-2c0-.180.020-.360.070-.520l-2.550-2.550c-.160.050-.340.070-.520.070s-.360-.020-.520-.070l-4.550 4.560c.050.160.070.330.070.510 0 1.100-.900 2-2 2s-2-.900-2-2 .900-2 2-2c.180 0 .350.020.510.070l4.560-4.550C8.020 9.360 8 9.180 8 9c0-1.100.900-2 2-2s2 .900 2 2c0 .180-.020.360-.070.520l2.550 2.550c.160-.050.340-.070.520-.070s.360.020.520.070l3.550-3.560C19.020 8.350 19 8.180 19 8c0-1.100.900-2 2-2s2 .900 2 2z"/></svg>
<div class="t" style="left:1269px;top:529px;font-size:13.200px;line-height:24px;color:#eceef1"><span class="mono" id="rt1" style="letter-spacing:0.060px;-webkit-text-stroke:0.180px #eceef1">lead(factor)</span><span class="chip" style="display:inline-block;vertical-align:top;margin-left:8.500px;margin-top:2px;padding:0 8px;height:19px;border-radius:4px;background:#272e38;color:#c3c8d1;font-size:11px;line-height:19px;font-family:'Liberation Sans',sans-serif">Time Series</span></div>
<div class="t" id="rd1" style="left:1269px;top:551px;font-size:13px;line-height:20px;color:#c3c8d1">Next period value</div>
<svg class="ic" style="left:1186px;top:606.5px;width:18px;height:18px;fill:#727a88" viewBox="0 0 24 24"><path d="M11 18c0 1.100-.900 2-2 2s-2-.900-2-2 .900-2 2-2 2 .900 2 2zm-2-8c-1.100 0-2 .900-2 2s.900 2 2 2 2-.900 2-2-.900-2-2-2zm0-6c-1.100 0-2 .900-2 2s.900 2 2 2 2-.900 2-2-.900-2-2-2zm6 4c1.100 0 2-.900 2-2s-.900-2-2-2-2 .900-2 2 .900 2 2 2zm0 2c-1.100 0-2 .900-2 2s.900 2 2 2 2-.900 2-2-.900-2-2-2zm0 6c-1.100 0-2 .900-2 2s.900 2 2 2 2-.900 2-2-.900-2-2-2z"/></svg>
<div class="abs" style="left:1219px;top:598px;width:38px;height:38px;border-radius:8px;background:#1f2d4a;border:1px solid #2c4270"></div>
<svg class="ic" style="left:1229px;top:608px;width:18px;height:18px;fill:#2d6aec" viewBox="0 0 24 24"><path d="M23 8c0 1.100-.900 2-2 2-.180 0-.350-.020-.510-.070l-3.560 3.550c.050.160.070.340.070.520 0 1.100-.900 2-2 2s-2-.900-2-2c0-.180.020-.360.070-.520l-2.550-2.550c-.160.050-.340.070-.520.070s-.360-.020-.520-.070l-4.550 4.560c.050.160.070.330.070.510 0 1.100-.900 2-2 2s-2-.900-2-2 .900-2 2-2c.180 0 .350.020.510.070l4.560-4.550C8.020 9.360 8 9.180 8 9c0-1.100.900-2 2-2s2 .900 2 2c0 .180-.020.360-.070.520l2.550 2.550c.160-.050.340-.070.520-.070s.360.020.520.070l3.550-3.560C19.020 8.350 19 8.180 19 8c0-1.100.900-2 2-2s2 .900 2 2z"/></svg>
<div class="t" style="left:1269px;top:596px;font-size:13.200px;line-height:24px;color:#eceef1"><span class="mono" id="rt2" style="letter-spacing:0.060px;-webkit-text-stroke:0.180px #eceef1">dif(factor, n)</span><span class="chip" style="display:inline-block;vertical-align:top;margin-left:8.500px;margin-top:2px;padding:0 8px;height:19px;border-radius:4px;background:#272e38;color:#c3c8d1;font-size:11px;line-height:19px;font-family:'Liberation Sans',sans-serif">Time Series</span></div>
<div class="t" id="rd2" style="left:1269px;top:619px;font-size:13px;line-height:20px;color:#c3c8d1">Difference over n periods</div>
<svg class="ic" style="left:1186px;top:674.5px;width:18px;height:18px;fill:#727a88" viewBox="0 0 24 24"><path d="M11 18c0 1.100-.900 2-2 2s-2-.900-2-2 .900-2 2-2 2 .900 2 2zm-2-8c-1.100 0-2 .900-2 2s.900 2 2 2 2-.900 2-2-.900-2-2-2zm0-6c-1.100 0-2 .900-2 2s.900 2 2 2 2-.900 2-2-.900-2-2-2zm6 4c1.100 0 2-.900 2-2s-.900-2-2-2-2 .900-2 2 .900 2 2 2zm0 2c-1.100 0-2 .900-2 2s.900 2 2 2 2-.900 2-2-.900-2-2-2zm0 6c-1.100 0-2 .900-2 2s.900 2 2 2 2-.900 2-2-.900-2-2-2z"/></svg>
<div class="abs" style="left:1219px;top:666px;width:38px;height:38px;border-radius:8px;background:#1f2d4a;border:1px solid #2c4270"></div>
<svg class="ic" style="left:1229px;top:676px;width:18px;height:18px;fill:#2d6aec" viewBox="0 0 24 24"><path d="M23 8c0 1.100-.900 2-2 2-.180 0-.350-.020-.510-.070l-3.560 3.550c.050.160.070.340.070.520 0 1.100-.900 2-2 2s-2-.900-2-2c0-.180.020-.360.070-.520l-2.550-2.550c-.160.050-.340.070-.520.070s-.360-.020-.520-.070l-4.550 4.560c.050.160.070.330.070.510 0 1.100-.900 2-2 2s-2-.900-2-2 .900-2 2-2c.180 0 .350.020.510.070l4.560-4.550C8.020 9.360 8 9.180 8 9c0-1.100.900-2 2-2s2 .900 2 2c0 .180-.020.360-.070.520l2.550 2.550c.160-.050.340-.070.520-.070s.360.020.520.070l3.550-3.560C19.020 8.350 19 8.180 19 8c0-1.100.900-2 2-2s2 .900 2 2z"/></svg>
<div class="t" style="left:1269px;top:664px;font-size:13.200px;line-height:24px;color:#eceef1"><span class="mono" id="rt3" style="letter-spacing:0.060px;-webkit-text-stroke:0.180px #eceef1">getval(factor, n)</span><span class="chip" style="display:inline-block;vertical-align:top;margin-left:8.500px;margin-top:2px;padding:0 8px;height:19px;border-radius:4px;background:#272e38;color:#c3c8d1;font-size:11px;line-height:19px;font-family:'Liberation Sans',sans-serif">Time Series</span></div>
<div class="t" id="rd3" style="left:1269px;top:686px;font-size:13px;line-height:20px;color:#c3c8d1">Value at relative period</div>
<svg class="ic" style="left:1186px;top:741.5px;width:18px;height:18px;fill:#727a88" viewBox="0 0 24 24"><path d="M11 18c0 1.100-.900 2-2 2s-2-.900-2-2 .900-2 2-2 2 .900 2 2zm-2-8c-1.100 0-2 .900-2 2s.900 2 2 2 2-.900 2-2-.900-2-2-2zm0-6c-1.100 0-2 .900-2 2s.900 2 2 2 2-.900 2-2-.900-2-2-2zm6 4c1.100 0 2-.900 2-2s-.900-2-2-2-2 .900-2 2 .900 2 2 2zm0 2c-1.100 0-2 .900-2 2s.900 2 2 2 2-.900 2-2-.900-2-2-2zm0 6c-1.100 0-2 .900-2 2s.900 2 2 2 2-.900 2-2-.900-2-2-2z"/></svg>
<div class="abs" style="left:1219px;top:733px;width:38px;height:38px;border-radius:8px;background:#1f2d4a;border:1px solid #2c4270"></div>
<svg class="ic" style="left:1229px;top:743px;width:18px;height:18px;fill:#2d6aec" viewBox="0 0 24 24"><path d="M23 8c0 1.100-.900 2-2 2-.180 0-.350-.020-.510-.070l-3.560 3.550c.050.160.070.340.070.520 0 1.100-.900 2-2 2s-2-.900-2-2c0-.180.020-.360.070-.520l-2.550-2.550c-.160.050-.340.070-.520.070s-.360-.020-.520-.070l-4.550 4.560c.050.160.070.330.070.510 0 1.100-.900 2-2 2s-2-.900-2-2 .900-2 2-2c.180 0 .350.020.510.070l4.560-4.550C8.020 9.360 8 9.180 8 9c0-1.100.900-2 2-2s2 .900 2 2c0 .180-.020.360-.070.520l2.550 2.550c.160-.050.340-.070.520-.070s.360.020.520.070l3.550-3.560C19.020 8.350 19 8.180 19 8c0-1.100.900-2 2-2s2 .900 2 2z"/></svg>
<div class="t" style="left:1269px;top:731px;font-size:13.200px;line-height:24px;color:#eceef1"><span class="mono" id="rt4" style="letter-spacing:0.060px;-webkit-text-stroke:0.180px #eceef1">getvaldate(factor, date)</span><span class="chip" style="display:inline-block;vertical-align:top;margin-left:8.500px;margin-top:2px;padding:0 8px;height:19px;border-radius:4px;background:#272e38;color:#c3c8d1;font-size:11px;line-height:19px;font-family:'Liberation Sans',sans-serif">Time Series</span></div>
<div class="t" id="rd4" style="left:1269px;top:754px;font-size:13px;line-height:20px;color:#c3c8d1">Value at specific date</div>
<!--SUBMIT-->
<div class="abs" style="left:1645px;top:799px;width:114px;height:40px;border-radius:20px;background:#2f6288"></div>
<svg class="ic" style="left:1661px;top:810px;width:18px;height:18px;fill:#fff" viewBox="0 0 24 24"><path d="M19 13h-6v6h-2v-6H5v-2h6V5h2v6h6v2z"/></svg>
<div class="t hd" id="submit" style="left:1688px;top:809px;font-size:15px;line-height:20px;color:#fff;font-weight:400;-webkit-text-stroke:0.300px #fff">Submit</div>
<svg class="abs" style="left:1080px;top:360px;width:700px;height:440px" viewBox="0 0 700 440"><rect x="15.100" y="15" width="669.950" height="413.900" rx="0.300" fill="none" stroke="#ee3a36" stroke-width="3.100"/></svg>
</body>
</html>
